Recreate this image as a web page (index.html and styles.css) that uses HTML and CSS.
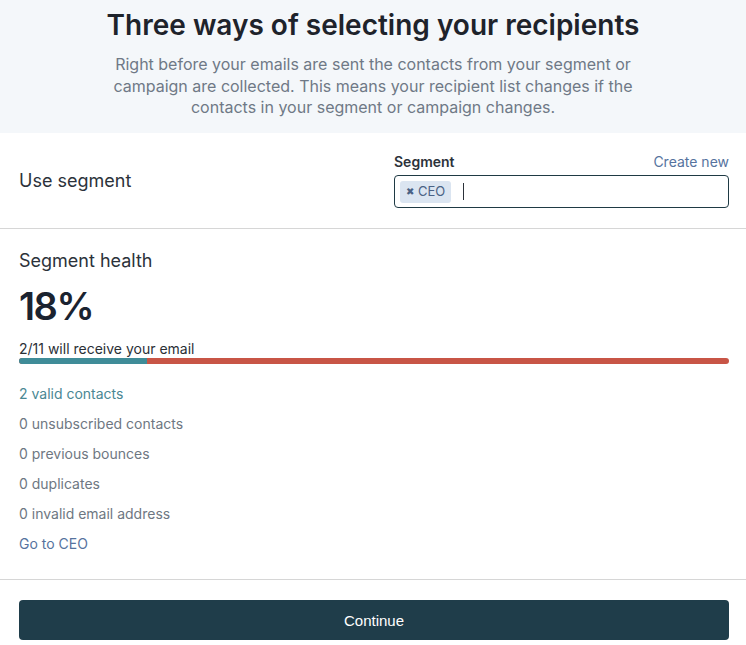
FILE: index.html
```html
<!DOCTYPE html>
<html lang="en">
<head>
    <meta charset="UTF-8">
    <meta name="viewport" content="width=device-width, initial-scale=1.0">
    <title>Select recipients</title>
    <link rel="stylesheet" href="styles.css">
</head>
<body>
    <div class="intro">
        <h1>Three ways of selecting your recipients</h1>
        <p>Right before your emails are sent the contacts from your segment or campaign are collected. This means your recipient list changes if the contacts in your segment or campaign changes.</p>
    </div>

    <div class="section choose">
        <div class="choose-label">Use segment</div>
        <div class="field">
            <div class="field-head">
                <label for="segment">Segment</label>
                <a href="#" class="link">Create new</a>
            </div>
            <div class="select-box">
                <span class="tag"><span class="tag-x">&#10006;</span>CEO</span>
                <span class="caret"></span>
            </div>
        </div>
    </div>

    <div class="section health">
        <h2>Segment health</h2>
        <div class="percent">18%</div>
        <div class="receive">2/11 will receive your email</div>
        <div class="bar">
            <div class="bar-fill" style="width: 18%"></div>
        </div>
        <ul class="stats">
            <li class="valid">2 valid contacts</li>
            <li>0 unsubscribed contacts</li>
            <li>0 previous bounces</li>
            <li>0 duplicates</li>
            <li>0 invalid email address</li>
            <li><a href="#" class="link">Go to CEO</a></li>
        </ul>
    </div>

    <div class="footer">
        <button>Continue</button>
    </div>
</body>
</html>
```

FILE: styles.css
```css
body {
    font-family: Inter, "Noto Sans", sans-serif;
    margin: 0;
    background: #ffffff;
    color: #2b2f36;
}
.intro {
    background-color: #f4f7fa;
    text-align: center;
    padding: 8px 90px 16px;
    height: 109px;
}
.intro h1 {
    margin: 0;
    font-size: 28px;
    font-weight: 600;
    line-height: 34px;
    color: #1e232b;
}
.intro p {
    margin: 12px 0 0;
    font-size: 16px;
    line-height: 21.5px;
    color: #6f7986;
}
.section {
    padding: 0 17px 0 19px;
    border-bottom: 1px solid #d6d6d6;
}
.choose {
    display: flex;
    justify-content: space-between;
    align-items: center;
    height: 95px;
}
.choose-label {
    font-size: 18px;
    color: #2c323a;
}
.field {
    width: 335px;
}
.field-head {
    display: flex;
    justify-content: space-between;
    align-items: baseline;
    margin-bottom: 5px;
}
.field-head label {
    font-size: 14px;
    font-weight: 600;
    color: #2c323a;
}
.link {
    color: #56739e;
    text-decoration: none;
    font-size: 14px;
}
.select-box {
    display: flex;
    align-items: center;
    height: 31px;
    border: 1px solid #1f3a44;
    border-radius: 4px;
    padding: 0 5px;
}
.tag {
    background: #dbe5f1;
    color: #4a6285;
    font-size: 13px;
    border-radius: 3px;
    padding: 2px 6px;
    line-height: 17px;
}
.tag-x {
    font-size: 10px;
    margin-right: 4px;
    position: relative;
    top: -1px;
}
.caret {
    display: inline-block;
    width: 1px;
    height: 17px;
    background: #2c323a;
    margin-left: 12px;
}
.health {
    padding-top: 20px;
    padding-bottom: 20px;
}
.health h2 {
    margin: 0;
    font-size: 18px;
    font-weight: 400;
    line-height: 24px;
    color: #2c323a;
}
.percent {
    font-size: 38px;
    font-weight: 600;
    line-height: 46px;
    margin-top: 10px;
    letter-spacing: -1.5px;
    color: #1b2330;
}
.receive {
    margin-top: 11px;
    font-size: 14px;
    line-height: 18px;
    color: #2a2f36;
}
.bar {
    height: 6px;
    border-radius: 3px;
    background: #c85546;
    overflow: hidden;
}
.bar-fill {
    height: 100%;
    background: #3f8c98;
}
.stats {
    list-style: none;
    margin: 15px 0 0;
    padding: 0;
}
.stats li {
    font-size: 14px;
    line-height: 30px;
    color: #6e7782;
}
.stats li.valid {
    color: #4a8793;
}
.footer {
    padding: 20px 17px 0 19px;
}
button {
    width: 100%;
    height: 40px;
    background: #1f3d4a;
    color: #ffffff;
    border: none;
    border-radius: 4px;
    font-family: "Liberation Sans", Arial, sans-serif;
    font-size: 15px;
    cursor: pointer;
}
```
